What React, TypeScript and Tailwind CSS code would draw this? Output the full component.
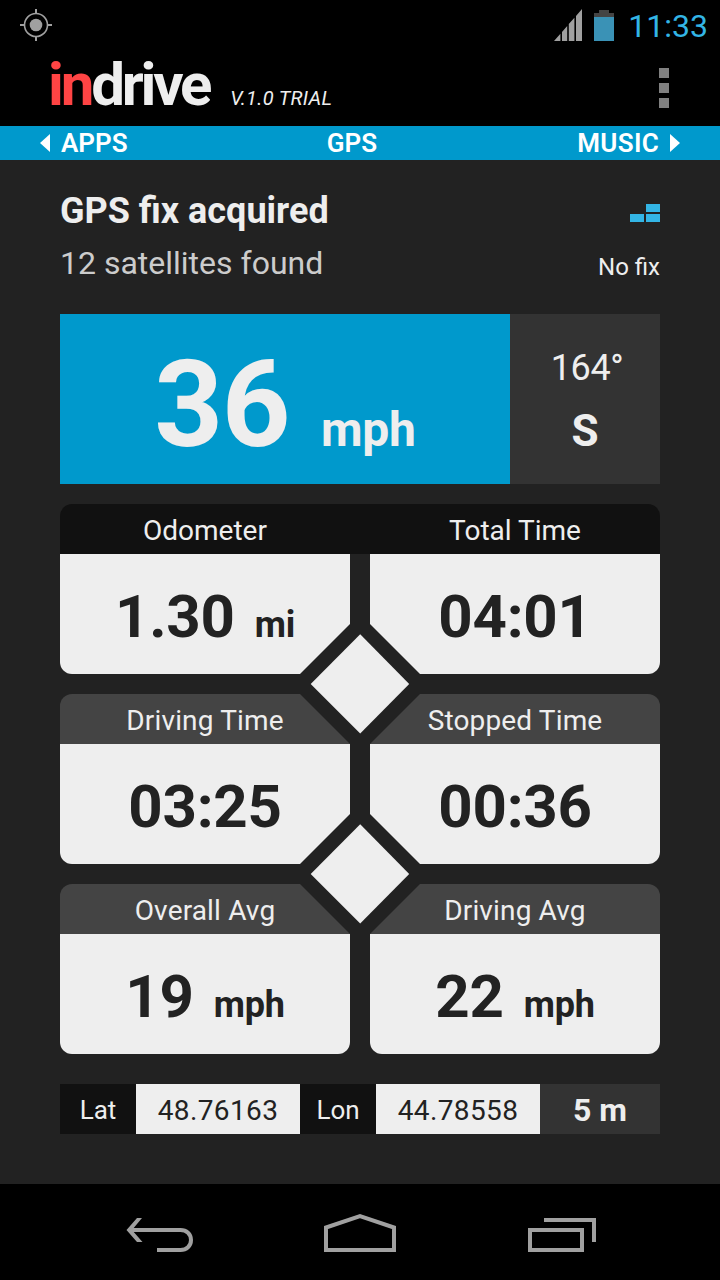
import clsx from "clsx";

const stats = [
  { label: "Odometer", value: "1.30", unit: "mi" },
  { label: "Total Time", value: "04:01" },
  { label: "Driving Time", value: "03:25" },
  { label: "Stopped Time", value: "00:36" },
  { label: "Overall Avg", value: "19", unit: "mph" },
  { label: "Driving Avg", value: "22", unit: "mph" },
];

function StatusBar() {
  return (
    <div className="flex h-[50px] items-center justify-between pl-5 pr-3">
      <svg width="32" height="32" viewBox="0 0 32 32" fill="none" stroke="#a0a0a0">
        <circle cx="16" cy="16" r="11.5" strokeWidth="1.6" />
        <circle cx="16" cy="16" r="6.3" fill="#a0a0a0" stroke="none" />
        <path d="M16 0v5M16 27v5M0 16h5M27 16h5" strokeWidth="2" />
      </svg>
      <div className="flex items-center">
        <svg width="28" height="32" viewBox="0 0 28 32" fill="#a0a0a0">
          <path d="M0 32 6.4 24.7V32ZM8 22.9 13.2 17V32H8ZM14.8 15.1 20.4 8.8V32H14.8ZM22 7 28 0V32H22Z" />
        </svg>
        <svg className="ml-3" width="20" height="31" viewBox="0 0 20 31">
          <path d="M5 0h10v3h5v5H0V3h5z" fill="#444" />
          <path d="M0 7h20v24H0z" fill="#3a92b6" />
        </svg>
        <span className="ml-[14px] pt-px text-[32px] leading-8 text-[#33b5e5]">11:33</span>
      </div>
    </div>
  );
}

function AppBar() {
  return (
    <header className="flex h-[76px] items-start justify-between pl-12 pr-[51px]">
      <div className="flex items-baseline">
        <h1 className="text-[60px] font-bold leading-[70px] tracking-[-3.2px] text-[#eee]">
          <span className="text-[#ff4444]">in</span>drive
        </h1>
        <span className="ml-[21px] text-xl italic tracking-[0.3px] text-[#eee]">V.1.0 TRIAL</span>
      </div>
      <div className="mt-[18px] flex flex-col gap-[5px]">
        <i className="size-[10px] bg-[#808080]" />
        <i className="size-[10px] bg-[#808080]" />
        <i className="size-[10px] bg-[#808080]" />
      </div>
    </header>
  );
}

function Tabs() {
  return (
    <nav className="grid h-[34px] grid-cols-3 items-center bg-[#0099cc] px-10 text-[26px] font-semibold leading-[34px] text-white">
      <span className="flex items-center">
        <svg className="mr-[11px]" width="10" height="18" viewBox="0 0 10 18" fill="currentColor">
          <path d="M10 0v18L0 9z" />
        </svg>
        APPS
      </span>
      <span className="-ml-4 text-center">GPS</span>
      <span className="flex items-center justify-end tracking-[0.3px]">
        MUSIC
        <svg className="ml-[11px]" width="10" height="18" viewBox="0 0 10 18" fill="currentColor">
          <path d="M0 0v18l10-9z" />
        </svg>
      </span>
    </nav>
  );
}

function FixStatus() {
  return (
    <section className="flex h-[154px] justify-between pt-[30px]">
      <div>
        <h2 className="text-4xl font-bold leading-[42px] text-[#eee]">GPS fix acquired</h2>
        <p className="mt-3 text-[32px] leading-[38px] text-[#ccc]">12 satellites found</p>
      </div>
      <div className="flex flex-col items-end pt-[14px]">
        <svg width="30" height="18" viewBox="0 0 30 18" fill="#33b5e5">
          <path d="M16 0h14v8H16zM0 10h14v8H0zM16 10h14v8H16z" />
        </svg>
        <span className="mt-[31px] text-2xl leading-7 text-[#eee]">No fix</span>
      </div>
    </section>
  );
}

function Speed() {
  return (
    <section className="flex h-[170px] text-[#eee]">
      <div className="flex w-[450px] items-baseline justify-center bg-[#0099cc] pt-[18px]">
        <span className="text-[120px] font-bold leading-[146px] tracking-[-1.5px]">36</span>
        <span className="ml-8 text-5xl font-bold tracking-[-0.3px]">mph</span>
      </div>
      <div className="flex w-[150px] flex-col items-center bg-[#333] pt-[33px]">
        <span className="pl-1 text-4xl leading-[42px] tracking-[-0.4px]">164°</span>
        <span className="mt-4 text-[44px] font-bold leading-[52px]">S</span>
      </div>
    </section>
  );
}

// Square turned on its corner, with a gap around it that cuts into the four cards it touches
function Diamond({ className }: { className: string }) {
  return (
    <svg className={clsx("absolute left-[230px]", className)} width="140" height="140" viewBox="0 0 140 140">
      <path d="M70 0l70 70-70 70L0 70z" fill="#222" />
      <path d="M70.200 20.200 119.200 70 70.200 119.500 20.700 70z" fill="#eee" />
    </svg>
  );
}

function Stats() {
  return (
    <section className="relative mt-5">
      <div className="grid grid-cols-2 gap-y-5">
        {stats.map((stat, i) => {
          const left = i % 2 === 0;
          const firstRow = i < 2;
          return (
            <div key={stat.label} className="flex h-[170px] flex-col">
              <div
                className={clsx(
                  "h-[50px] pt-[2px] text-center text-[28px] leading-[50px] text-[#eee]",
                  firstRow ? "bg-[#111]" : "rounded-t-xl bg-[#444] tracking-[0.15px]",
                  firstRow && (left ? "rounded-tl-xl pr-[10px]" : "rounded-tr-xl pl-[10px]"),
                  !firstRow && (left ? "mr-[10px]" : "ml-[10px]")
                )}
              >
                {stat.label}
              </div>
              <div
                className={clsx(
                  "flex h-[120px] items-baseline justify-center rounded-b-xl bg-[#eee] font-bold text-[#222]",
                  left ? "mr-[10px]" : "ml-[10px]"
                )}
              >
                <span className="text-[60px] leading-[126px] tracking-[-0.2px]">{stat.value}</span>
                {stat.unit && <span className="ml-5 text-4xl tracking-[-0.2px]">{stat.unit}</span>}
              </div>
            </div>
          );
        })}
      </div>
      <Diamond className="top-[110px]" />
      <Diamond className="top-[300px]" />
    </section>
  );
}

function Position() {
  return (
    <section className="mt-[30px] flex h-[50px] text-center text-[28px]">
      <span className="w-[76px] bg-[#111] text-[26px] leading-[52px] text-[#eee]">Lat</span>
      <span className="w-[164px] bg-[#eee] leading-[53px] tracking-[0.4px] text-[#222]">48.76163</span>
      <span className="w-[76px] bg-[#111] text-[26px] leading-[52px] text-[#eee]">Lon</span>
      <span className="w-[164px] bg-[#eee] leading-[53px] tracking-[0.4px] text-[#222]">44.78558</span>
      <span className="w-[120px] bg-[#333] text-[32px] font-bold leading-[52px] text-[#eee]">5 m</span>
    </section>
  );
}

function NavBar() {
  return (
    <footer className="h-24 bg-black">
      <svg width="720" height="96" viewBox="0 0 720 96" fill="none" stroke="#a0a0a0" strokeWidth="4">
        <path d="M130 46h50.500c6 0 10.500 4 10.500 10s-4.500 10-10.500 10H157" />
        <path d="M142 34h-5L126.500 46 137 58h5.500L132 46z" fill="#a0a0a0" stroke="none" />
        <path d="M326 66V43.500L360 32l34 11.500V66z" />
        <path d="M530 46h52v20h-52zM544 36h50v22" />
      </svg>
    </footer>
  );
}

export default function App() {
  return (
    <div className="flex h-[1280px] w-[720px] flex-col overflow-hidden bg-black font-['Roboto',sans-serif]">
      <StatusBar />
      <AppBar />
      <Tabs />
      <main className="h-[1024px] bg-[#222] px-[60px]">
        <FixStatus />
        <Speed />
        <Stats />
        <Position />
      </main>
      <NavBar />
    </div>
  );
}
